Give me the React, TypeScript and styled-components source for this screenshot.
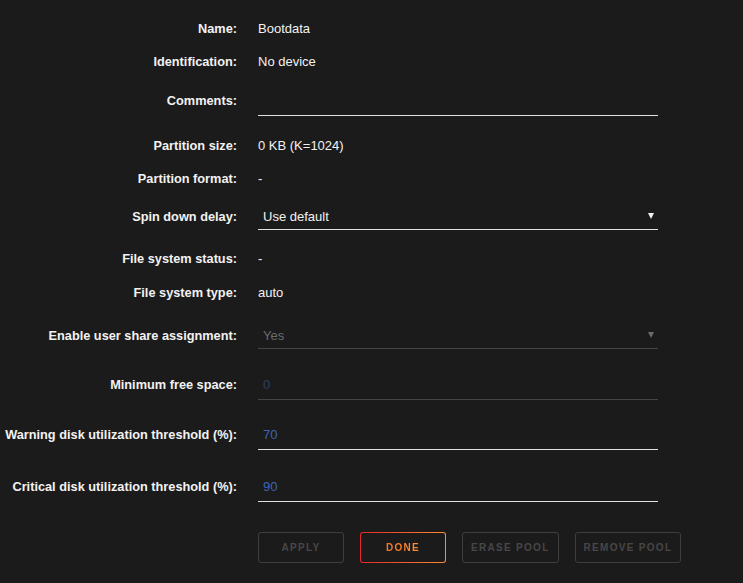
import React from "react";
import styled, { createGlobalStyle } from "styled-components";

const GlobalStyle = createGlobalStyle`
  html, body {
    margin: 0;
    padding: 0;
    background: #1c1b1b;
  }
  body {
    font-family: "Liberation Sans", Arial, sans-serif;
    font-size: 13px;
    color: #f2f2f2;
  }
`;

const Page = styled.div`
  width: 743px;
  min-height: 583px;
  padding-top: 12px;
  box-sizing: border-box;
  background: #1c1b1b;
`;

const Row = styled.div<{ $h: number; $top?: number }>`
  display: grid;
  grid-template-columns: 237px 400px;
  column-gap: 21px;
  align-items: center;
  height: ${(p) => p.$h}px;
  margin-top: ${(p) => p.$top ?? 0}px;
`;

const Label = styled.div`
  text-align: right;
  font-weight: bold;
  font-size: 12.75px;
  white-space: nowrap;
  color: #f2f2f2;
`;

const Value = styled.div`
  color: #f2f2f2;
`;

const Field = styled.div<{ $h: number; $line: string; $color: string }>`
  box-sizing: border-box;
  height: ${(p) => p.$h}px;
  display: flex;
  align-items: center;
  justify-content: space-between;
  padding: 0 4px 0 5px;
  border-bottom: 1px solid ${(p) => p.$line};
  color: ${(p) => p.$color};
`;

const Arrow = styled.span<{ $color: string }>`
  width: 0;
  height: 0;
  border-left: 3px solid transparent;
  border-right: 3px solid transparent;
  border-top: 6px solid ${(p) => p.$color};
  margin-bottom: 1px;
`;

const Buttons = styled.div`
  display: flex;
  gap: 16px;
  margin: 30px 0 0 258px;
`;

const Button = styled.div<{ $primary?: boolean }>`
  box-sizing: border-box;
  height: 31px;
  min-width: 86px;
  padding: 0 8px;
  display: flex;
  align-items: center;
  justify-content: center;
  border-radius: 3px;
  font-size: 10px;
  font-weight: bold;
  letter-spacing: 1.3px;
  text-transform: uppercase;
  border: 1px solid ${(p) => (p.$primary ? "transparent" : "#3e3e3e")};
  color: #474747;
  background: ${(p) =>
    p.$primary
      ? "linear-gradient(#1c1b1b, #1c1b1b) padding-box, linear-gradient(90deg, #e22828, #ff8d30) border-box"
      : "transparent"};
`;

const GradientText = styled.span`
  background: linear-gradient(90deg, #f5762c, #ff8d30);
  -webkit-background-clip: text;
  background-clip: text;
  color: transparent;
`;

export default function App() {
  return (
    <Page>
      <GlobalStyle />
      <Row $h={33}>
        <Label>Name:</Label>
        <Value>Bootdata</Value>
      </Row>
      <Row $h={33}>
        <Label>Identification:</Label>
        <Value>No device</Value>
      </Row>
      <Row $h={31} $top={7}>
        <Label>Comments:</Label>
        <Field $h={31} $line="#e0e0e0" $color="#f2f2f2" />
      </Row>
      <Row $h={33} $top={13}>
        <Label>Partition size:</Label>
        <Value>0 KB (K=1024)</Value>
      </Row>
      <Row $h={33}>
        <Label>Partition format:</Label>
        <Value>-</Value>
      </Row>
      <Row $h={27} $top={8}>
        <Label>Spin down delay:</Label>
        <Field $h={27} $line="#e0e0e0" $color="#f2f2f2">
          Use default
          <Arrow $color="#f2f2f2" />
        </Field>
      </Row>
      <Row $h={33} $top={12}>
        <Label>File system status:</Label>
        <Value>-</Value>
      </Row>
      <Row $h={33} $top={1}>
        <Label>File system type:</Label>
        <Value>auto</Value>
      </Row>
      <Row $h={27} $top={13}>
        <Label>Enable user share assignment:</Label>
        <Field $h={27} $line="#444444" $color="#6b6b6b">
          Yes
          <Arrow $color="#6b6b6b" />
        </Field>
      </Row>
      <Row $h={31} $top={20}>
        <Label>Minimum free space:</Label>
        <Field $h={31} $line="#444444" $color="#2c3f66">
          0
        </Field>
      </Row>
      <Row $h={31} $top={19}>
        <Label>Warning disk utilization threshold (%):</Label>
        <Field $h={31} $line="#e0e0e0" $color="#3c65b8">
          70
        </Field>
      </Row>
      <Row $h={31} $top={21}>
        <Label>Critical disk utilization threshold (%):</Label>
        <Field $h={31} $line="#e0e0e0" $color="#3c65b8">
          90
        </Field>
      </Row>
      <Buttons>
        <Button>Apply</Button>
        <Button $primary>
          <GradientText>Done</GradientText>
        </Button>
        <Button>Erase pool</Button>
        <Button>Remove pool</Button>
      </Buttons>
    </Page>
  );
}
